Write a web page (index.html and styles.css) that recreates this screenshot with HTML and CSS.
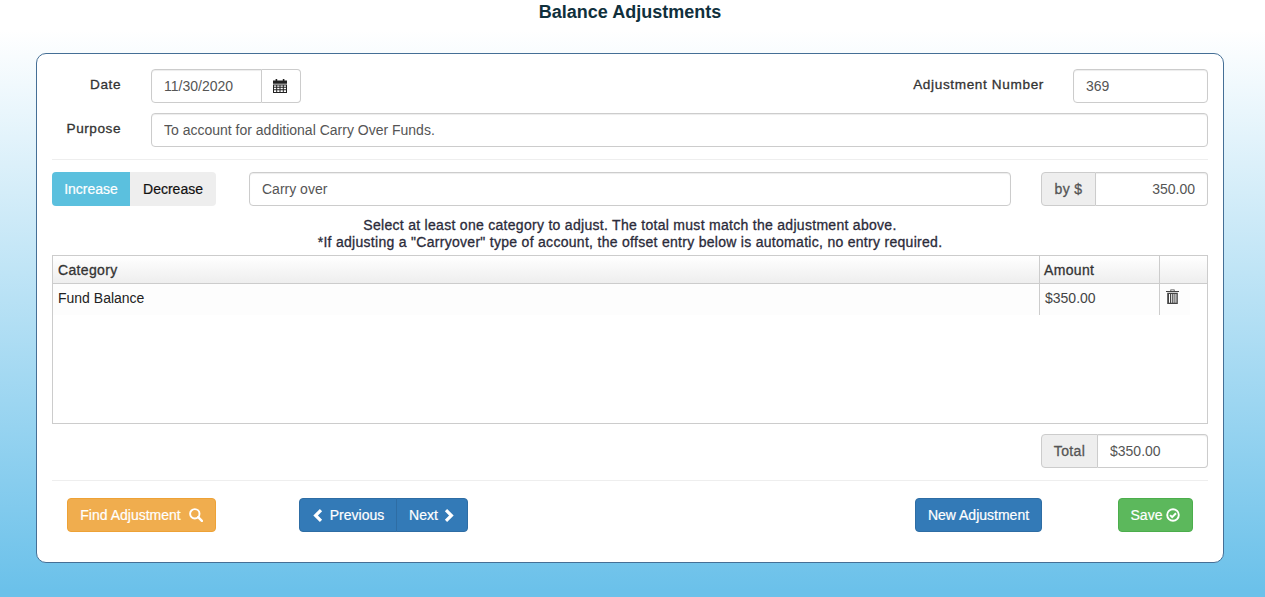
FILE: index.html
```html
<!DOCTYPE html>
<html lang="en">
<head>
<meta charset="utf-8">
<title>Balance Adjustments</title>
<link rel="stylesheet" href="styles.css">
</head>
<body>
<h1 class="title">Balance Adjustments</h1>
<main class="panel">
  <div class="row">
    <label class="label">Date</label>
    <div class="group date-group">
      <input class="input grouped-left" value="11/30/2020">
      <span class="addon addon-white">
        <svg class="icon-cal" viewBox="0 0 14 14" width="14" height="14"><path fill="#222" d="M0 1.6h2.6V0h1.6v1.6h5.6V0h1.6v1.6H14v3.2H0z"/><path fill="#222" fill-rule="evenodd" d="M0 5.4h14V14H0zM1 6.4v1.4h2.2V6.4zM4.2 6.4v1.4h2.3V6.4zM7.5 6.4v1.4h2.3V6.4zM10.8 6.4v1.4H13V6.4zM1 8.8v1.4h2.2V8.8zM4.2 8.8v1.4h2.3V8.8zM7.5 8.8v1.4h2.3V8.8zM10.8 8.8v1.4H13V8.8zM1 11.2V13h2.2v-1.8zM4.2 11.2V13h2.3v-1.8zM7.5 11.2V13h2.3v-1.8zM10.8 11.2V13H13v-1.8z"/></svg>
      </span>
    </div>
    <label class="label label-number">Adjustment Number</label>
    <input class="input number-input" value="369">
  </div>
  <div class="row row-purpose">
    <label class="label">Purpose</label>
    <input class="input grow" value="To account for additional Carry Over Funds.">
  </div>
  <hr class="rule rule-top">
  <div class="row">
    <div class="toggle">
      <span class="toggle-btn toggle-on">Increase</span>
      <span class="toggle-btn toggle-off">Decrease</span>
    </div>
    <input class="input grow desc-input" value="Carry over">
    <div class="group by-group">
      <span class="addon addon-grey by-addon">by $</span>
      <input class="input grouped-right amount-input" value="350.00">
    </div>
  </div>
  <p class="note">Select at least one category to adjust. The total must match the adjustment above.<br>*If adjusting a "Carryover" type of account, the offset entry below is automatic, no entry required.</p>
  <div class="table">
    <div class="thead">
      <div class="th col-cat">Category</div>
      <div class="th col-amt">Amount</div>
      <div class="th col-act"></div>
    </div>
    <div class="tbody-row">
      <div class="td col-cat td-name">Fund Balance</div>
      <div class="td col-amt td-amt">$350.00</div>
      <div class="td col-act td-act">
        <svg viewBox="0 0 13 15" width="13" height="15"><path fill="#444" fill-rule="evenodd" d="M4.4 2V0.6h4.2V2H13v1H0V2zM5.2 1.3V2h2.6v-.7zM1.2 3.8h10.6V15H1.2zM3 5v8.8h1V5zM5.2 5v8.8h1V5zM7.4 5v8.8h1V5zM9.4 5v8.8h1V5z"/></svg>
      </div>
    </div>
  </div>
  <div class="row total-row">
    <div class="group total-group">
      <span class="addon addon-grey total-addon">Total</span>
      <input class="input grouped-right total-input" value="$350.00">
    </div>
  </div>
  <hr class="rule rule-bottom">
  <div class="row actions">
    <button class="btn btn-orange">Find Adjustment
      <svg class="btn-icon" viewBox="0 0 14 14" width="14" height="14"><circle cx="5.8" cy="5.8" r="4.7" fill="none" stroke="#fff" stroke-width="1.9"/><path d="M9.2 9.2l3.7 3.7" stroke="#fff" stroke-width="2.4" stroke-linecap="round"/></svg>
    </button>
    <div class="btn-group">
      <button class="btn btn-blue btn-prev">
        <svg viewBox="0 0 10 13" width="10" height="13"><path d="M8 1.2L2.6 6.5 8 11.8" fill="none" stroke="#fff" stroke-width="3.2"/></svg>
        Previous</button>
      <button class="btn btn-blue btn-next">Next
        <svg viewBox="0 0 10 13" width="10" height="13"><path d="M2 1.2L7.4 6.5 2 11.8" fill="none" stroke="#fff" stroke-width="3.2"/></svg>
      </button>
    </div>
    <button class="btn btn-blue btn-new">New Adjustment</button>
    <button class="btn btn-green">Save
      <svg viewBox="0 0 14 14" width="14" height="14"><circle cx="7" cy="7" r="5.8" fill="none" stroke="#fff" stroke-width="1.9"/><path d="M4.1 7.1l2.1 2.1 3.8-3.9" fill="none" stroke="#fff" stroke-width="2"/></svg>
    </button>
  </div>
</main>
</body>
</html>
```
FILE: styles.css
```css
* { box-sizing: border-box; }
html, body { height: 100%; }
body {
  margin: 0;
  padding: 0 41px 0 36px;
  font-family: "Liberation Sans", Arial, sans-serif;
  font-size: 14px;
  line-height: 20px;
  color: #333;
  background: linear-gradient(180deg, #fff 0, #fff 30px, #6bc1ea 590px);
  overflow: hidden;
}
.title {
  margin: 0;
  height: 53px;
  padding-top: 1px;
  font-size: 18px;
  line-height: 22px;
  font-weight: 700;
  text-align: center;
  color: #10303c;
}
.panel {
  height: 510px;
  padding: 15px;
  background: #fff;
  border: 1px solid #456f96;
  border-radius: 10px;
}
.row { display: flex; align-items: center; height: 34px; }
.row-purpose { margin-top: 10px; }
.label {
  flex: none;
  width: 69px;
  margin-right: 30px;
  padding-bottom: 2px;
  font-size: 13.6px;
  letter-spacing: .55px;
  -webkit-text-stroke: .3px #333;
  text-align: right;
  color: #333;
}
.label-number { width: auto; margin: 0 29px 0 auto; letter-spacing: .63px; }
.input {
  display: block;
  height: 34px;
  min-width: 0;
  padding: 6px 12px;
  font: inherit;
  color: #555;
  background: #fff;
  border: 1px solid #ccc;
  border-radius: 4px;
  box-shadow: inset 0 1px 1px rgba(0, 0, 0, .075);
}
.grow { flex: 1; }
.number-input { width: 135px; flex: none; }
.group { display: flex; flex: none; height: 34px; }
.date-group { width: 150px; }
.date-group .input { width: 111px; }
.grouped-left { border-radius: 4px 0 0 4px; }
.grouped-right { border-radius: 0 4px 4px 0; border-left: 0; }
.addon {
  display: flex;
  align-items: center;
  justify-content: center;
  border: 1px solid #ccc;
}
.addon-white { width: 39px; padding-right: 2px; border-left: 0; border-radius: 0 4px 4px 0; }
.addon-grey {
  background: #eee;
  color: #555;
  letter-spacing: .35px;
  -webkit-text-stroke: .3px #555;
  border-radius: 4px 0 0 4px;
}
.rule { height: 1px; margin: 0; border: 0; background: #eee; }
.rule-top { margin: 12px 0; }
.toggle { display: flex; flex: none; width: 164px; height: 34px; }
.toggle-btn { display: flex; align-items: center; justify-content: center; -webkit-text-stroke: .2px; }
.toggle-on { width: 78px; background: #5bc0de; color: #fff; border-radius: 4px 0 0 4px; }
.toggle-off { width: 86px; background: #eee; color: #111; border-radius: 0 4px 4px 0; }
.desc-input { margin: 0 30px 0 33px; }
.by-group { width: 167px; }
.by-addon { width: 55px; }
.amount-input { width: 112px; text-align: right; }
.note {
  margin: 11px 0 4px;
  font-size: 14px;
  line-height: 17px;
  letter-spacing: .29px;
  -webkit-text-stroke: .3px #2b2b3a;
  text-align: center;
  color: #2b2b3a;
}
.table { height: 169px; border: 1px solid #ccc; }
.thead {
  display: flex;
  height: 28px;
  background: linear-gradient(180deg, #fff, #eee);
  border-bottom: 1px solid #ccc;
}
.th { padding: 4px 4px 4px 5px; letter-spacing: .35px; -webkit-text-stroke: .3px #333; color: #333; }
.col-cat { width: 986px; flex: none; }
.col-amt { width: 120px; flex: none; border-left: 1px solid #ccc; }
.col-act { flex: 1; border-left: 1px solid #ccc; }
.col-amt.th { padding-left: 4px; }
.tbody-row { display: flex; height: 31px; }
.td { padding: 4px 5px; background: #fdfdfd; }
.td-name { color: #222; }
.td-amt { color: #444; }
.td-act { flex: none; width: 31px; padding: 5px 0 0 6px; }
.td-act svg { display: block; }
.total-row { justify-content: flex-end; margin-top: 10px; }
.total-group { width: 167px; }
.total-addon { width: 57px; }
.total-input { width: 110px; }
.rule-bottom { margin: 12px 0 17px; }
.actions { padding: 0 15px; }
.btn {
  display: inline-flex;
  align-items: center;
  justify-content: center;
  height: 34px;
  padding: 0;
  font: inherit;
  color: #fff;
  border: 1px solid transparent;
  border-radius: 4px;
  -webkit-text-stroke: .2px #fff;
}
.btn svg { flex: none; }
.btn-orange { width: 149px; gap: 8px; background: #f0ad4e; border-color: #eea236; }
.btn-group { display: flex; margin-left: 83px; }
.btn-blue { background: #337ab7; border-color: #2e6da4; }
.btn-prev { width: 98px; gap: 7px; padding-left: 1px; border-radius: 4px 0 0 4px; }
.btn-next { width: 72px; gap: 6px; padding-right: 1px; margin-left: -1px; border-radius: 0 4px 4px 0; }
.btn-new { width: 127px; margin-left: auto; }
.btn-green { width: 75px; gap: 4px; margin-left: 76px; background: #5cb85c; border-color: #4cae4c; }
```
